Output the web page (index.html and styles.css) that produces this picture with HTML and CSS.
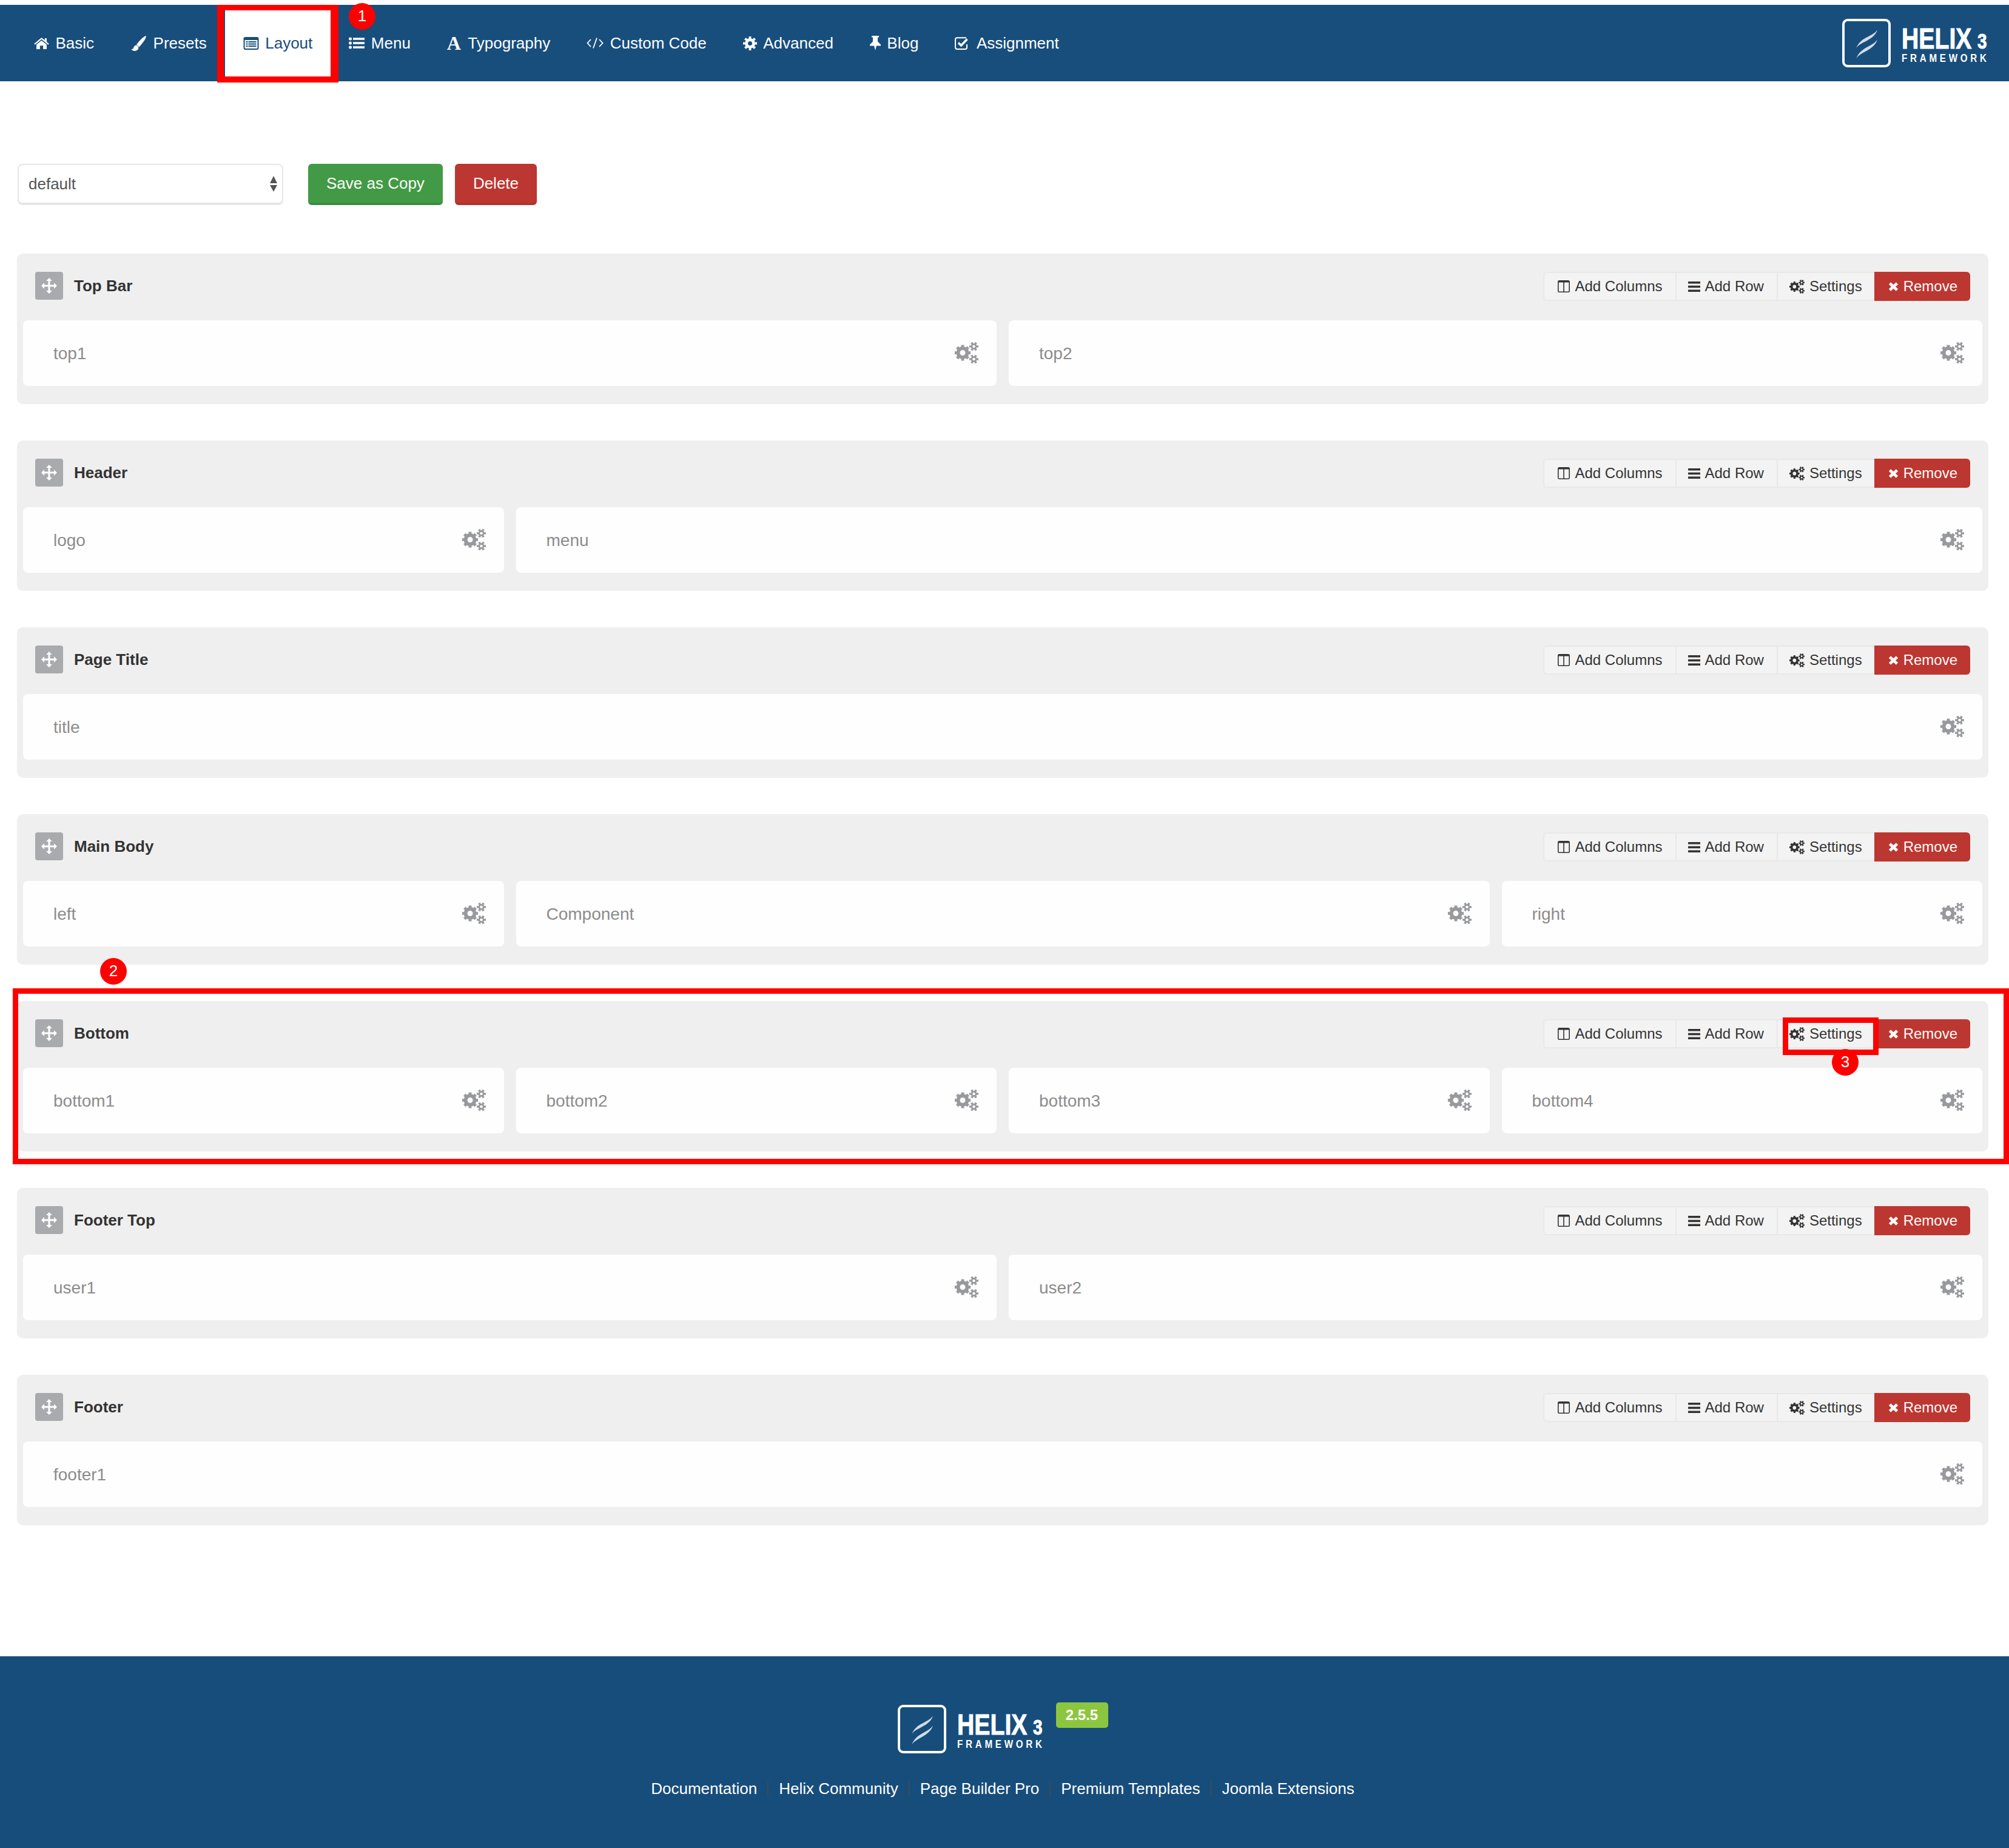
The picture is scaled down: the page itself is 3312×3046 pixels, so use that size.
FILE: index.html
```html
<!DOCTYPE html>
<html lang="en">
<head>
  <meta charset="UTF-8">
  <title>Helix3 Framework - Layout</title>
  <link rel="stylesheet" href="styles.css">
</head>
<body>
  <svg class="sprite" xmlns="http://www.w3.org/2000/svg">
    <symbol id="i-home" viewBox="0 0 23 18"><path d="M11.5 0 0 9.5l1.2 1.6L11.5 2.7l10.3 8.4 1.2-1.6-3.5-2.9V1h-3v3z"/><path d="M3.5 11v7H9v-5.5h5V18h5.5v-7l-8-6.5z"/></symbol>
    <symbol id="i-brush" viewBox="0 0 25 25"><path d="M24.500 0c-3.500 1-10 7-15.500 14.500l4.500 4C19 12 26 3.500 24.500 0z"/><path d="M8.500 15.500C5 16 4.500 19 4 20c-.5 2-2.500 2-3.500 2 2 3.500 7.500 4 10.500 1 2.500-2.500 1.500-6.500-2.500-7.500z"/></symbol>
    <symbol id="i-list-alt" viewBox="0 0 25 21"><path fill-rule="evenodd" d="M3 0h19a3 3 0 0 1 3 3v15a3 3 0 0 1-3 3H3a3 3 0 0 1-3-3V3a3 3 0 0 1 3-3zM2 5v13a1 1 0 0 0 1 1h19a1 1 0 0 0 1-1V5z"/><path d="M4 7h3v2H4zM8 7h13v2H8zM4 10.500h3v2H4zM8 10.500h13v2H8zM4 14h3v2H4zM8 14h13v2H8z"/></symbol>
    <symbol id="i-list" viewBox="0 0 26 20"><circle cx="2.500" cy="3" r="2.500"/><circle cx="2.500" cy="10" r="2.500"/><circle cx="2.500" cy="17" r="2.500"/><path d="M7 1.200h19v3.600H7zM7 8.200h19v3.600H7zM7 15.200h19v3.600H7z"/></symbol>
    <symbol id="i-code" viewBox="0 0 28 18"><path d="M7 3 1.500 9 7 15M17 .5l-6 17M21 3l5.500 6-5.500 6" fill="none" stroke="currentColor" stroke-width="1.800"/></symbol>
    <symbol id="i-cog" viewBox="0 0 23 23"><circle cx="11.500" cy="11.500" r="6" fill="none" stroke="currentColor" stroke-width="5"/><circle cx="11.500" cy="11.500" r="9.500" fill="none" stroke="currentColor" stroke-width="4" pathLength="80" stroke-dasharray="5 5" stroke-dashoffset="2.500"/></symbol>
    <symbol id="i-pin" viewBox="0 0 18 24"><path d="M3 0h12v2.500h-2v7l5 5v2h-7l-2 7.500-2-7.500H0v-2l5-5v-7H3z"/></symbol>
    <symbol id="i-check" viewBox="0 0 25 21"><path d="M19 1.200H4a3 3 0 0 0-3 3V17a3 3 0 0 0 3 3h13a3 3 0 0 0 3-3v-5" fill="none" stroke="currentColor" stroke-width="2"/><path d="M6 9.500l4.500 4.500L20.500 3.500" fill="none" stroke="currentColor" stroke-width="3.600"/></symbol>
    <symbol id="i-move" viewBox="0 0 26 26"><path d="M13 0l5 5h-3.500v6.500H21V8l5 5-5 5v-3.500h-6.500V21H18l-5 5-5-5h3.500v-6.500H5V18l-5-5 5-5v3.500h6.500V5H8z"/></symbol>
    <symbol id="i-columns" viewBox="0 0 20 20"><path d="M2.500.8h15a1.700 1.700 0 0 1 1.700 1.700v15a1.700 1.700 0 0 1-1.700 1.700h-15A1.700 1.700 0 0 1 .8 17.500v-15A1.700 1.700 0 0 1 2.500.8zM10 1v18" fill="none" stroke="currentColor" stroke-width="1.600"/><path d="M1 1h18v2.500H1z"/></symbol>
    <symbol id="i-bars" viewBox="0 0 20 17"><path d="M0 0h20v3.400H0zM0 6.800h20v3.400H0zM0 13.600h20V17H0z"/></symbol>
    <symbol id="i-times" viewBox="0 0 17 15"><path d="M2.500 2 14.500 13M14.500 2 2.500 13" fill="none" stroke="currentColor" stroke-width="4.800"/></symbol>
    <symbol id="i-cogs" viewBox="0 0 39 35">
      <circle cx="13" cy="17.500" r="7.500" fill="none" stroke="currentColor" stroke-width="6"/>
      <circle cx="13" cy="17.500" r="11" fill="none" stroke="currentColor" stroke-width="4.200" pathLength="80" stroke-dasharray="5.500 4.500" stroke-dashoffset="2.750"/>
      <circle cx="31.500" cy="7" r="3.700" fill="none" stroke="currentColor" stroke-width="2.800"/>
      <circle cx="31.500" cy="7" r="6" fill="none" stroke="currentColor" stroke-width="3" pathLength="60" stroke-dasharray="5.500 4.500" stroke-dashoffset="2.750"/>
      <circle cx="31.500" cy="28" r="3.700" fill="none" stroke="currentColor" stroke-width="2.800"/>
      <circle cx="31.500" cy="28" r="6" fill="none" stroke="currentColor" stroke-width="3" pathLength="60" stroke-dasharray="5.500 4.500" stroke-dashoffset="2.750"/>
    </symbol>
    <symbol id="i-helix" viewBox="0 0 80 80">
      <rect x="2" y="2" width="76" height="76" rx="7" fill="none" stroke="currentColor" stroke-width="4"/>
      <path d="M58 18C51 30 30 29 23 49c5-11 30-13 35-31z" opacity=".8"/>
      <path d="M58 34C51 46 30 46 23 66c5-11 30-14 35-32z" opacity=".8"/>
    </symbol>
  </svg>

  <header class="topbar">
    <nav class="nav">
      <a class="nav-link"><svg class="ic-home"><use href="#i-home"/></svg>Basic</a>
      <a class="nav-link"><svg class="ic-brush"><use href="#i-brush"/></svg>Presets</a>
      <a class="nav-link active"><svg class="ic-listalt"><use href="#i-list-alt"/></svg>Layout</a>
      <a class="nav-link"><svg class="ic-list"><use href="#i-list"/></svg>Menu</a>
      <a class="nav-link"><span class="ic-font">A</span>Typography</a>
      <a class="nav-link"><svg class="ic-code"><use href="#i-code"/></svg>Custom Code</a>
      <a class="nav-link"><svg class="ic-cog"><use href="#i-cog"/></svg>Advanced</a>
      <a class="nav-link"><svg class="ic-pin"><use href="#i-pin"/></svg>Blog</a>
      <a class="nav-link"><svg class="ic-check"><use href="#i-check"/></svg>Assignment</a>
    </nav>
    <div class="logo">
      <svg class="logo-mark"><use href="#i-helix"/></svg>
      <div class="logo-text"><div class="logo-name">HELIX<span>3</span></div><div class="logo-sub">FRAMEWORK</div></div>
    </div>
  </header>

  <main class="content">
    <div class="toolbar">
      <div class="select"><span>default</span><span class="select-arrows"></span></div>
      <a class="btn btn-green">Save as Copy</a>
      <a class="btn btn-red">Delete</a>
    </div>

    <section class="layout-section">
      <div class="section-head">
        <span class="handle"><svg><use href="#i-move"/></svg></span>
        <h3>Top Bar</h3>
        <div class="btn-group">
          <a><svg class="ic-columns"><use href="#i-columns"/></svg>Add Columns</a>
          <a><svg class="ic-bars"><use href="#i-bars"/></svg>Add Row</a>
          <a class="settings"><svg class="ic-cogs"><use href="#i-cogs"/></svg>Settings</a>
          <a class="remove"><svg class="ic-times"><use href="#i-times"/></svg>Remove</a>
        </div>
      </div>
      <div class="row">
        <div class="col span-6">top1<svg class="col-gear"><use href="#i-cogs"/></svg></div>
        <div class="col span-6">top2<svg class="col-gear"><use href="#i-cogs"/></svg></div>
      </div>
    </section>

    <section class="layout-section">
      <div class="section-head">
        <span class="handle"><svg><use href="#i-move"/></svg></span>
        <h3>Header</h3>
        <div class="btn-group">
          <a><svg class="ic-columns"><use href="#i-columns"/></svg>Add Columns</a>
          <a><svg class="ic-bars"><use href="#i-bars"/></svg>Add Row</a>
          <a class="settings"><svg class="ic-cogs"><use href="#i-cogs"/></svg>Settings</a>
          <a class="remove"><svg class="ic-times"><use href="#i-times"/></svg>Remove</a>
        </div>
      </div>
      <div class="row">
        <div class="col span-3">logo<svg class="col-gear"><use href="#i-cogs"/></svg></div>
        <div class="col span-9">menu<svg class="col-gear"><use href="#i-cogs"/></svg></div>
      </div>
    </section>

    <section class="layout-section">
      <div class="section-head">
        <span class="handle"><svg><use href="#i-move"/></svg></span>
        <h3>Page Title</h3>
        <div class="btn-group">
          <a><svg class="ic-columns"><use href="#i-columns"/></svg>Add Columns</a>
          <a><svg class="ic-bars"><use href="#i-bars"/></svg>Add Row</a>
          <a class="settings"><svg class="ic-cogs"><use href="#i-cogs"/></svg>Settings</a>
          <a class="remove"><svg class="ic-times"><use href="#i-times"/></svg>Remove</a>
        </div>
      </div>
      <div class="row">
        <div class="col span-12">title<svg class="col-gear"><use href="#i-cogs"/></svg></div>
      </div>
    </section>

    <section class="layout-section">
      <div class="section-head">
        <span class="handle"><svg><use href="#i-move"/></svg></span>
        <h3>Main Body</h3>
        <div class="btn-group">
          <a><svg class="ic-columns"><use href="#i-columns"/></svg>Add Columns</a>
          <a><svg class="ic-bars"><use href="#i-bars"/></svg>Add Row</a>
          <a class="settings"><svg class="ic-cogs"><use href="#i-cogs"/></svg>Settings</a>
          <a class="remove"><svg class="ic-times"><use href="#i-times"/></svg>Remove</a>
        </div>
      </div>
      <div class="row">
        <div class="col span-3">left<svg class="col-gear"><use href="#i-cogs"/></svg></div>
        <div class="col span-6">Component<svg class="col-gear"><use href="#i-cogs"/></svg></div>
        <div class="col span-3">right<svg class="col-gear"><use href="#i-cogs"/></svg></div>
      </div>
    </section>

    <section class="layout-section">
      <div class="section-head">
        <span class="handle"><svg><use href="#i-move"/></svg></span>
        <h3>Bottom</h3>
        <div class="btn-group">
          <a><svg class="ic-columns"><use href="#i-columns"/></svg>Add Columns</a>
          <a><svg class="ic-bars"><use href="#i-bars"/></svg>Add Row</a>
          <a class="settings"><svg class="ic-cogs"><use href="#i-cogs"/></svg>Settings</a>
          <a class="remove"><svg class="ic-times"><use href="#i-times"/></svg>Remove</a>
        </div>
      </div>
      <div class="row">
        <div class="col span-3">bottom1<svg class="col-gear"><use href="#i-cogs"/></svg></div>
        <div class="col span-3">bottom2<svg class="col-gear"><use href="#i-cogs"/></svg></div>
        <div class="col span-3">bottom3<svg class="col-gear"><use href="#i-cogs"/></svg></div>
        <div class="col span-3">bottom4<svg class="col-gear"><use href="#i-cogs"/></svg></div>
      </div>
    </section>

    <section class="layout-section">
      <div class="section-head">
        <span class="handle"><svg><use href="#i-move"/></svg></span>
        <h3>Footer Top</h3>
        <div class="btn-group">
          <a><svg class="ic-columns"><use href="#i-columns"/></svg>Add Columns</a>
          <a><svg class="ic-bars"><use href="#i-bars"/></svg>Add Row</a>
          <a class="settings"><svg class="ic-cogs"><use href="#i-cogs"/></svg>Settings</a>
          <a class="remove"><svg class="ic-times"><use href="#i-times"/></svg>Remove</a>
        </div>
      </div>
      <div class="row">
        <div class="col span-6">user1<svg class="col-gear"><use href="#i-cogs"/></svg></div>
        <div class="col span-6">user2<svg class="col-gear"><use href="#i-cogs"/></svg></div>
      </div>
    </section>

    <section class="layout-section">
      <div class="section-head">
        <span class="handle"><svg><use href="#i-move"/></svg></span>
        <h3>Footer</h3>
        <div class="btn-group">
          <a><svg class="ic-columns"><use href="#i-columns"/></svg>Add Columns</a>
          <a><svg class="ic-bars"><use href="#i-bars"/></svg>Add Row</a>
          <a class="settings"><svg class="ic-cogs"><use href="#i-cogs"/></svg>Settings</a>
          <a class="remove"><svg class="ic-times"><use href="#i-times"/></svg>Remove</a>
        </div>
      </div>
      <div class="row">
        <div class="col span-12">footer1<svg class="col-gear"><use href="#i-cogs"/></svg></div>
      </div>
    </section>
  </main>

  <footer class="footer">
    <div class="footer-brand">
      <div class="logo">
        <svg class="logo-mark"><use href="#i-helix"/></svg>
        <div class="logo-text"><div class="logo-name">HELIX<span>3</span></div><div class="logo-sub">FRAMEWORK</div></div>
      </div>
      <span class="version">2.5.5</span>
    </div>
    <div class="footer-links">
      <a>Documentation</a>
      <a>Helix Community</a>
      <a>Page Builder Pro</a>
      <a>Premium Templates</a>
      <a>Joomla Extensions</a>
    </div>
  </footer>

  <!-- tutorial markers drawn over the screenshot -->
  <div class="mark mark-tab"></div>
  <div class="mark mark-row"></div>
  <div class="mark mark-settings"></div>
  <span class="dot dot-1">1</span>
  <span class="dot dot-2">2</span>
  <span class="dot dot-3">3</span>
</body>
</html>
```

FILE: styles.css
```css
html, body {
  margin: 0;
  padding: 0;
  background: #fff;
}

body {
  min-height: 3046px;
  display: flex;
  flex-direction: column;
  font-family: "Liberation Sans", Arial, sans-serif;
  font-size: 26px;
  color: #333;
  overflow-x: hidden;
}

.sprite {
  display: none;
}

svg {
  fill: currentColor;
  flex: none;
  display: block;
}

/* top bar */
.topbar {
  margin-top: 8px;
  height: 126px;
  background: #184e7c;
  display: flex;
  align-items: center;
  justify-content: space-between;
  padding: 0 36px 0 26px;
  color: #fff;
}

.nav {
  display: flex;
  height: 100%;
}

.nav-link {
  display: flex;
  align-items: center;
  gap: 10.5px;
  padding: 0 30px;
  color: #fff;
}

.nav-link.active {
  background: #fff;
  color: #184e7c;
}

.ic-home { width: 25px; height: 19px; }
.ic-brush { width: 27px; height: 25px; }
.ic-listalt { width: 26px; height: 21px; }
.ic-list { width: 26px; height: 20px; }
.ic-code { width: 28px; height: 18px; }
.ic-cog { width: 23px; height: 23px; }
.ic-pin { width: 18px; height: 24px; }
.ic-check { width: 25px; height: 21px; }

.ic-font {
  width: 24px;
  font-family: "Liberation Serif", serif;
  font-weight: bold;
  font-size: 32px;
  line-height: 1;
}

/* helix logo */
.logo {
  display: flex;
  align-items: center;
  gap: 18px;
  color: #fff;
}

.logo-mark {
  width: 80px;
  height: 80px;
}

.logo-text {
  width: 141px;
  padding-top: 5.500px;
  white-space: nowrap;
  font-family: "Liberation Sans", sans-serif;
  font-weight: bold;
}

.logo-name {
  font-size: 49px;
  line-height: 44px;
  -webkit-text-stroke: 1px #fff;
  transform: scaleX(.8);
  transform-origin: 0 50%;
}

.logo-name span {
  font-size: 35px;
  margin-left: 12px;
}

.logo-sub {
  margin-top: -4.500px;
  font-size: 19px;
  line-height: 22px;
  letter-spacing: 5.900px;
  transform: scaleX(.8);
  transform-origin: 0 50%;
}

/* template picker */
.content {
  padding: 136px 34px 0 28px;
}

.toolbar {
  display: flex;
  align-items: stretch;
  height: 68px;
  margin-bottom: 80px;
}

.select {
  width: 438px;
  box-sizing: border-box;
  margin: 0 41px 0 1px;
  padding: 0 8px 0 16px;
  display: flex;
  align-items: center;
  justify-content: space-between;
  background: #fff;
  border: 2px solid #e6e6e6;
  border-bottom-width: 4px;
  border-radius: 8px;
  color: #555;
}

.select-arrows {
  display: flex;
  flex-direction: column;
  gap: 3px;
}

.select-arrows::before,
.select-arrows::after {
  content: "";
  width: 0;
  height: 0;
  border-left: 6.5px solid transparent;
  border-right: 6.5px solid transparent;
}

.select-arrows::before {
  border-bottom: 12px solid #555;
}

.select-arrows::after {
  border-top: 11px solid #555;
}

.btn {
  display: flex;
  align-items: center;
  padding: 0 30px;
  margin-right: 20px;
  color: #fff;
  border-radius: 6px;
  box-sizing: border-box;
}

.btn-green {
  background: #439a46;
  border-bottom: 4px solid #3d8b40;
}

.btn-red {
  background: #bc3731;
  border-bottom: 4px solid #b0332d;
}

/* layout rows */
.layout-section {
  background: #efefef;
  border-radius: 10px;
  margin-bottom: 60px;
  height: 248px;
}

.section-head {
  height: 110px;
  padding: 30px 30px 0;
  box-sizing: border-box;
  display: flex;
  align-items: flex-start;
}

.handle {
  width: 46px;
  height: 46px;
  background: #a9aaad;
  border-radius: 4px;
  display: flex;
  align-items: center;
  justify-content: center;
  color: #fff;
}

.handle svg {
  width: 26px;
  height: 26px;
}

.section-head h3 {
  margin: 0 0 0 18px;
  font-size: 26px;
  font-weight: bold;
  line-height: 46px;
  color: #333;
}

.btn-group {
  margin-left: auto;
  display: flex;
  height: 48px;
  box-sizing: border-box;
  font-size: 24px;
  background: #f3f3f3;
  border: 2px solid #e8e8e8;
  border-right: 0;
  border-radius: 6px;
}

.btn-group a {
  display: flex;
  align-items: center;
  gap: 8px;
  padding: 0 21px 0 19px;
  border-right: 2px solid #e8e8e8;
}

.btn-group a:first-child {
  padding-left: 22px;
}

.btn-group a.settings {
  padding-right: 20px;
  border-right: 0;
}

.btn-group a.remove {
  background: #bc3731;
  color: #fff;
  border-right: 0;
  margin: -2px 0;
  padding: 0 21px 0 23px;
  border-radius: 0 6px 6px 0;
}

.ic-columns { width: 20px; height: 20px; }
.ic-bars { width: 20px; height: 17px; }
.ic-cogs { width: 25px; height: 23px; }
.ic-times { width: 17px; height: 15px; }

.row {
  margin: 0 10px;
  display: grid;
  grid-template-columns: repeat(12, 1fr);
  column-gap: 20px;
}

.col {
  height: 108px;
  box-sizing: border-box;
  padding: 2px 30px 0 50px;
  background: #fefefe;
  border-radius: 8px;
  display: flex;
  align-items: center;
  justify-content: space-between;
  font-size: 28px;
  color: #8c8c8c;
}

.span-3 { grid-column: span 3; }
.span-6 { grid-column: span 6; }
.span-9 { grid-column: span 9; }
.span-12 { grid-column: span 12; }

.col-gear {
  width: 39px;
  height: 35px;
  margin-top: -3px;
  color: #98999c;
}

/* footer */
.footer {
  margin-top: auto;
  height: 316px;
  box-sizing: border-box;
  padding: 76px 6px 0 0;
  background: #174d7b;
  color: #fff;
}

.footer-brand {
  display: flex;
  justify-content: center;
  align-items: flex-start;
  gap: 22px;
}

.footer-brand .logo {
  margin-top: 4px;
}

.version {
  width: 86px;
  height: 42px;
  background: #8cc63f;
  border-radius: 5px;
  font-size: 24px;
  font-weight: bold;
  line-height: 42px;
  text-align: center;
}

.footer-links {
  display: flex;
  justify-content: center;
  margin-top: 46px;
  line-height: 25px;
}

.footer-links a {
  padding: 0 17px;
  border-right: 2px solid #3f4a55;
}

.footer-links a:last-child {
  border-right: 0;
}

/* tutorial markers */
.mark {
  position: absolute;
  box-sizing: border-box;
  border: 9px solid #f00;
}

.mark-tab {
  left: 358px;
  top: 8px;
  width: 200px;
  height: 128px;
  border-width: 9px 13px 10px 11px;
}

.mark-row {
  left: 21px;
  top: 1629px;
  width: 3291px;
  height: 290px;
}

.mark-settings {
  left: 2939px;
  top: 1677px;
  width: 158px;
  height: 62px;
}

.dot {
  position: absolute;
  width: 44px;
  height: 44px;
  border-radius: 50%;
  background: #f00;
  color: #fff;
  font-size: 26px;
  line-height: 42px;
  text-align: center;
}

.dot-1 { left: 575px; top: 5px; }
.dot-2 { left: 165px; top: 1579px; }
.dot-3 { left: 3020px; top: 1729px; }
```
